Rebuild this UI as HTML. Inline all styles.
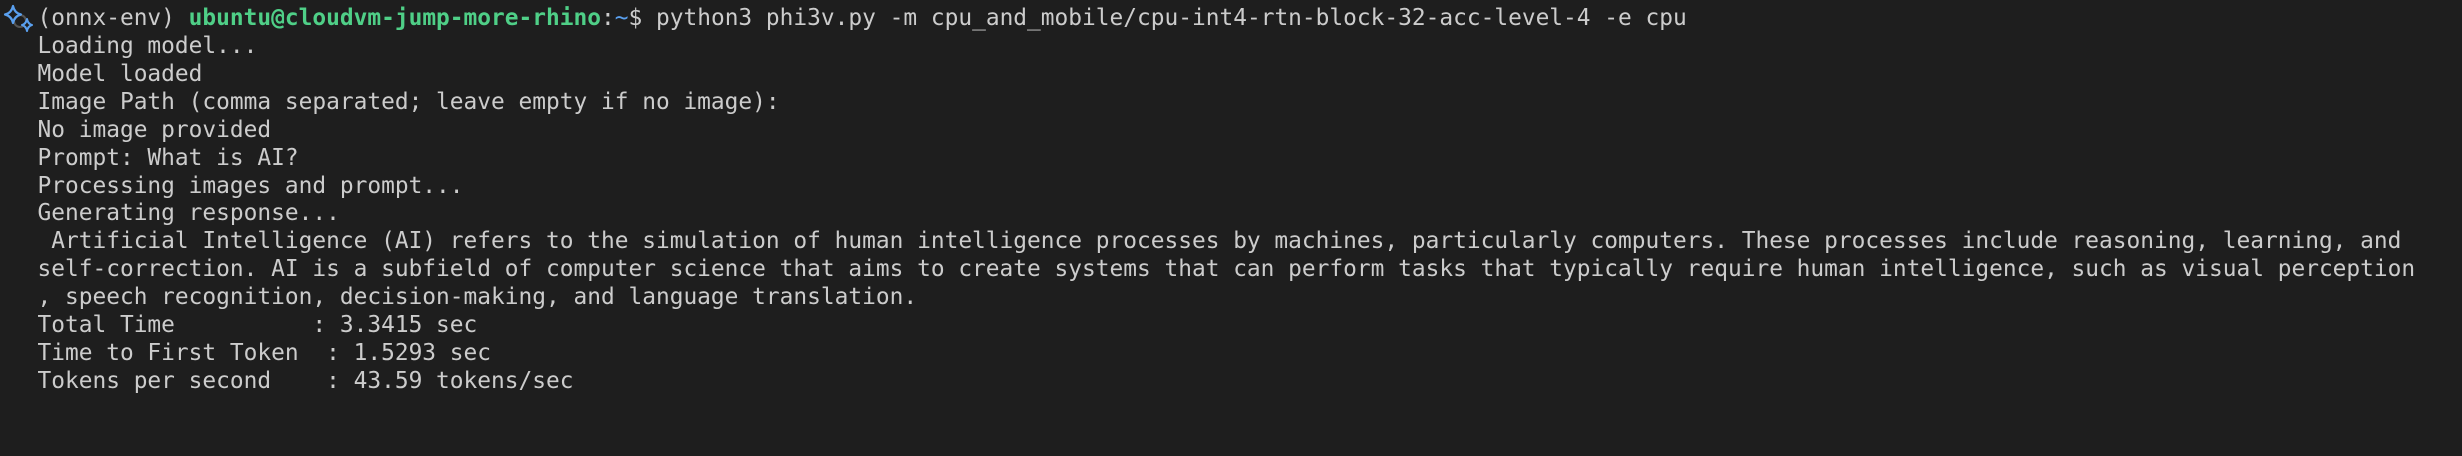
<!DOCTYPE html>
<html><head><meta charset="utf-8"><style>
html,body{margin:0;padding:0;background:#1e1e1e;}
body{width:2462px;height:456px;overflow:hidden;position:relative;}
pre{margin:0;position:absolute;left:10px;top:5px;font-family:"DejaVu Sans Mono","Liberation Mono",monospace;font-size:22.83px;line-height:27.92px;color:#cccccc;white-space:pre;}
.g{color:#4fcf87;font-weight:bold}
.b{color:#5aa0ef}
svg{position:absolute;left:0;top:2px}
</style></head><body>
<svg width="40" height="35" viewBox="0 0 40 35">
<circle cx="20" cy="19" r="6" fill="none" stroke="#555" stroke-width="2"/>
<path d="M13 4 Q14.5 11 21 12.5 Q14.5 14 13 21 Q11.5 14 5 12.5 Q11.5 11 13 4Z" fill="#1e1e1e" stroke="#5aa0ef" stroke-width="2.2" stroke-linejoin="round"/>
<path d="M27 17 Q28 22 32 23 Q28 24 27 29 Q26 24 22 23 Q26 22 27 17Z" fill="#1e1e1e" stroke="#5aa0ef" stroke-width="2" stroke-linejoin="round"/>
</svg>
<pre>  (onnx-env) <span class="g">ubuntu@cloudvm-jump-more-rhino</span>:<span class="b">~</span>$ python3 phi3v.py -m cpu_and_mobile/cpu-int4-rtn-block-32-acc-level-4 -e cpu
  Loading model...
  Model loaded
  Image Path (comma separated; leave empty if no image):
  No image provided
  Prompt: What is AI?
  Processing images and prompt...
  Generating response...
   Artificial Intelligence (AI) refers to the simulation of human intelligence processes by machines, particularly computers. These processes include reasoning, learning, and
  self-correction. AI is a subfield of computer science that aims to create systems that can perform tasks that typically require human intelligence, such as visual perception
  , speech recognition, decision-making, and language translation.
  Total Time          : 3.3415 sec
  Time to First Token  : 1.5293 sec
  Tokens per second    : 43.59 tokens/sec</pre>
</body></html>
